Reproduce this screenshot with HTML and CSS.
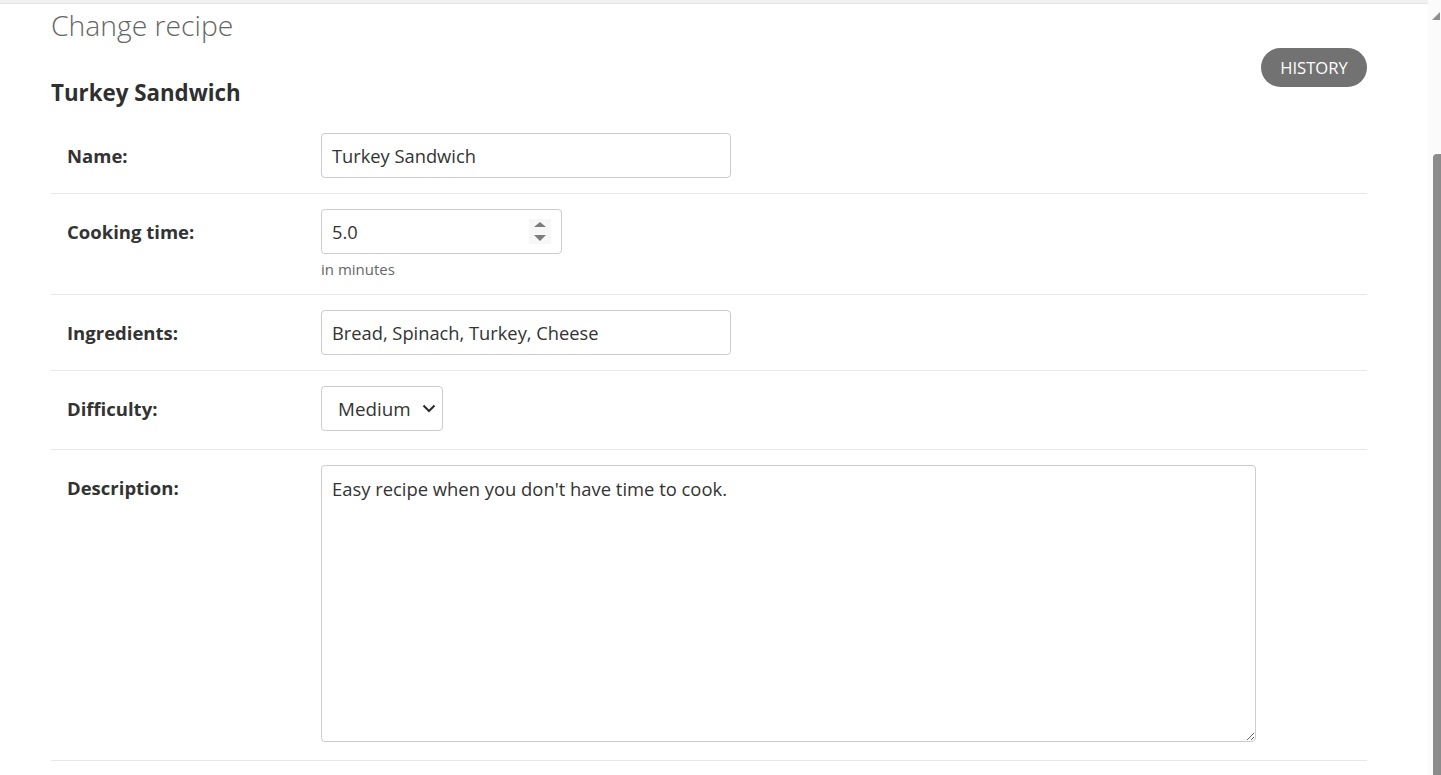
FILE: index.html
```html
<!DOCTYPE html>
<html lang="en">
<head>
<meta charset="utf-8">
<title>Change recipe</title>
<link rel="stylesheet" href="styles.css">
</head>
<body>
<div class="topbar"></div>
<main class="content">
  <h1 class="title">Change recipe</h1>
  <div class="subhead">
    <h2 class="object-name">Turkey Sandwich</h2>
    <a class="history-btn" href="#">HISTORY</a>
  </div>
  <form class="form">
    <div class="form-row form-row-first">
      <label class="field-label" for="id_name">Name:</label>
      <div class="field">
        <input class="text-input wide" id="id_name" type="text" value="Turkey Sandwich">
      </div>
    </div>
    <div class="form-row">
      <label class="field-label" for="id_time">Cooking time:</label>
      <div class="field">
        <div class="number-box">
          <input class="number-input" id="id_time" type="text" value="5.0">
          <span class="spin">
            <svg width="22" height="25" viewBox="0 0 22 25"><path d="M5 8 L11 3 L17 8 Z" fill="#7d7d7d"/><path d="M5 16 L17 16 L11 22 Z" fill="#7d7d7d"/></svg>
          </span>
        </div>
        <div class="help">in minutes</div>
      </div>
    </div>
    <div class="form-row">
      <label class="field-label" for="id_ing">Ingredients:</label>
      <div class="field">
        <input class="text-input wide" id="id_ing" type="text" value="Bread, Spinach, Turkey, Cheese">
      </div>
    </div>
    <div class="form-row form-row-select">
      <label class="field-label" for="id_diff">Difficulty:</label>
      <div class="field">
        <div class="select-box">
          <select class="select" id="id_diff">
            <option>Easy</option>
            <option selected>Medium</option>
            <option>Hard</option>
          </select>
          <svg class="chevron" width="14" height="9" viewBox="0 0 14 9"><path d="M1.5 1.5 L7 7 L12.5 1.5" fill="none" stroke="#2b2b2b" stroke-width="2"/></svg>
        </div>
      </div>
    </div>
    <div class="form-row form-row-area">
      <label class="field-label" for="id_desc">Description:</label>
      <div class="field">
        <textarea class="textarea" id="id_desc">Easy recipe when you don't have time to cook.</textarea>
      </div>
    </div>
  </form>
</main>
<div class="scrollbar">
  <div class="scroll-arrow"></div>
  <div class="scroll-thumb"></div>
</div>
</body>
</html>
```

FILE: styles.css
```css
* { box-sizing: border-box; }
html, body { margin: 0; padding: 0; background: #fff; }
body {
  font-family: "Open Sans", "Noto Sans", sans-serif;
  color: #333;
  overflow: hidden;
}
.topbar {
  height: 4px;
  background: #f1f1f1;
  border-bottom: 1px solid #e3e3e3;
}
.content {
  padding: 0 74px 0 51px;
}
.title {
  margin: 4px 0 0;
  font-size: 28.3px;
  font-weight: 300;
  line-height: 34px;
  color: #666;
}
.subhead {
  display: flex;
  justify-content: space-between;
  align-items: flex-start;
}
.object-name {
  margin: 39px 0 12px;
  font-size: 22.3px;
  font-weight: 700;
  line-height: 24px;
  color: #2f2f2f;
}
.history-btn {
  margin-top: 6px;
  height: 39px;
  width: 106px;
  display: flex;
  align-items: center;
  justify-content: center;
  border-radius: 20px;
  background: #727272;
  color: #fff;
  font-size: 16.6px;
  text-decoration: none;
}
.form-row {
  display: flex;
  align-items: flex-start;
  padding: 15px 0 15px 16px;
  border-bottom: 1px solid #e8e8e8;
}
.form-row-first { padding-top: 16px; }
.form-row-select { padding-bottom: 18px; }
.form-row-area { padding-bottom: 18px; }
.field-label {
  width: 254px;
  flex: none;
  font-size: 18.5px;
  font-weight: 700;
  line-height: 45px;
  color: #333;
}
.field { flex: 1; }
.text-input {
  display: block;
  height: 45px;
  border: 1px solid #ccc;
  border-radius: 4px;
  padding: 0 10px;
  font-family: inherit;
  font-size: 18.3px;
  color: #333;
  background: #fff;
}
.wide { width: 410px; }
.number-box {
  display: flex;
  align-items: center;
  width: 241px;
  height: 45px;
  border: 1px solid #ccc;
  border-radius: 4px;
  padding: 0 10px 0 10px;
}
.number-input {
  flex: 1;
  min-width: 0;
  border: 0;
  padding: 0;
  height: 100%;
  font-family: inherit;
  font-size: 18.3px;
  color: #333;
  background: transparent;
  outline: none;
}
.spin {
  display: block;
  width: 22px;
  height: 25px;
  background: #f7f7f7;
}
.spin svg { display: block; }
.help {
  margin-top: 5px;
  font-size: 15px;
  line-height: 20px;
  color: #666;
}
.select-box {
  display: inline-flex;
  align-items: center;
  width: 122px;
  height: 45px;
  border: 1px solid #ccc;
  border-radius: 4px;
  padding: 0 6px 0 16px;
}
.select {
  appearance: none;
  -webkit-appearance: none;
  border: 0;
  padding: 0;
  margin: 0;
  flex: 1;
  min-width: 0;
  font-family: inherit;
  font-size: 18.8px;
  color: #333;
  background: transparent;
  outline: none;
}
.chevron { display: block; flex: none; }
.textarea {
  display: block;
  width: 935px;
  height: 277px;
  border: 1px solid #ccc;
  border-radius: 4px;
  padding: 10px 10px;
  font-family: inherit;
  font-size: 18.4px;
  line-height: 25px;
  color: #333;
  resize: vertical;
}
.scrollbar {
  position: fixed;
  top: 0;
  right: 0;
  width: 13px;
  height: 100%;
  background: #fbfbfb;
}
.scroll-arrow {
  position: absolute;
  top: 12px;
  left: 4px;
  width: 0;
  height: 0;
  border-left: 8px solid transparent;
  border-bottom: 8px solid #8f8f8f;
}
.scroll-thumb {
  position: absolute;
  top: 154px;
  left: 5px;
  right: 0;
  bottom: 0;
  background: #8b8b8b;
  border-radius: 4px 0 0 0;
}
```
